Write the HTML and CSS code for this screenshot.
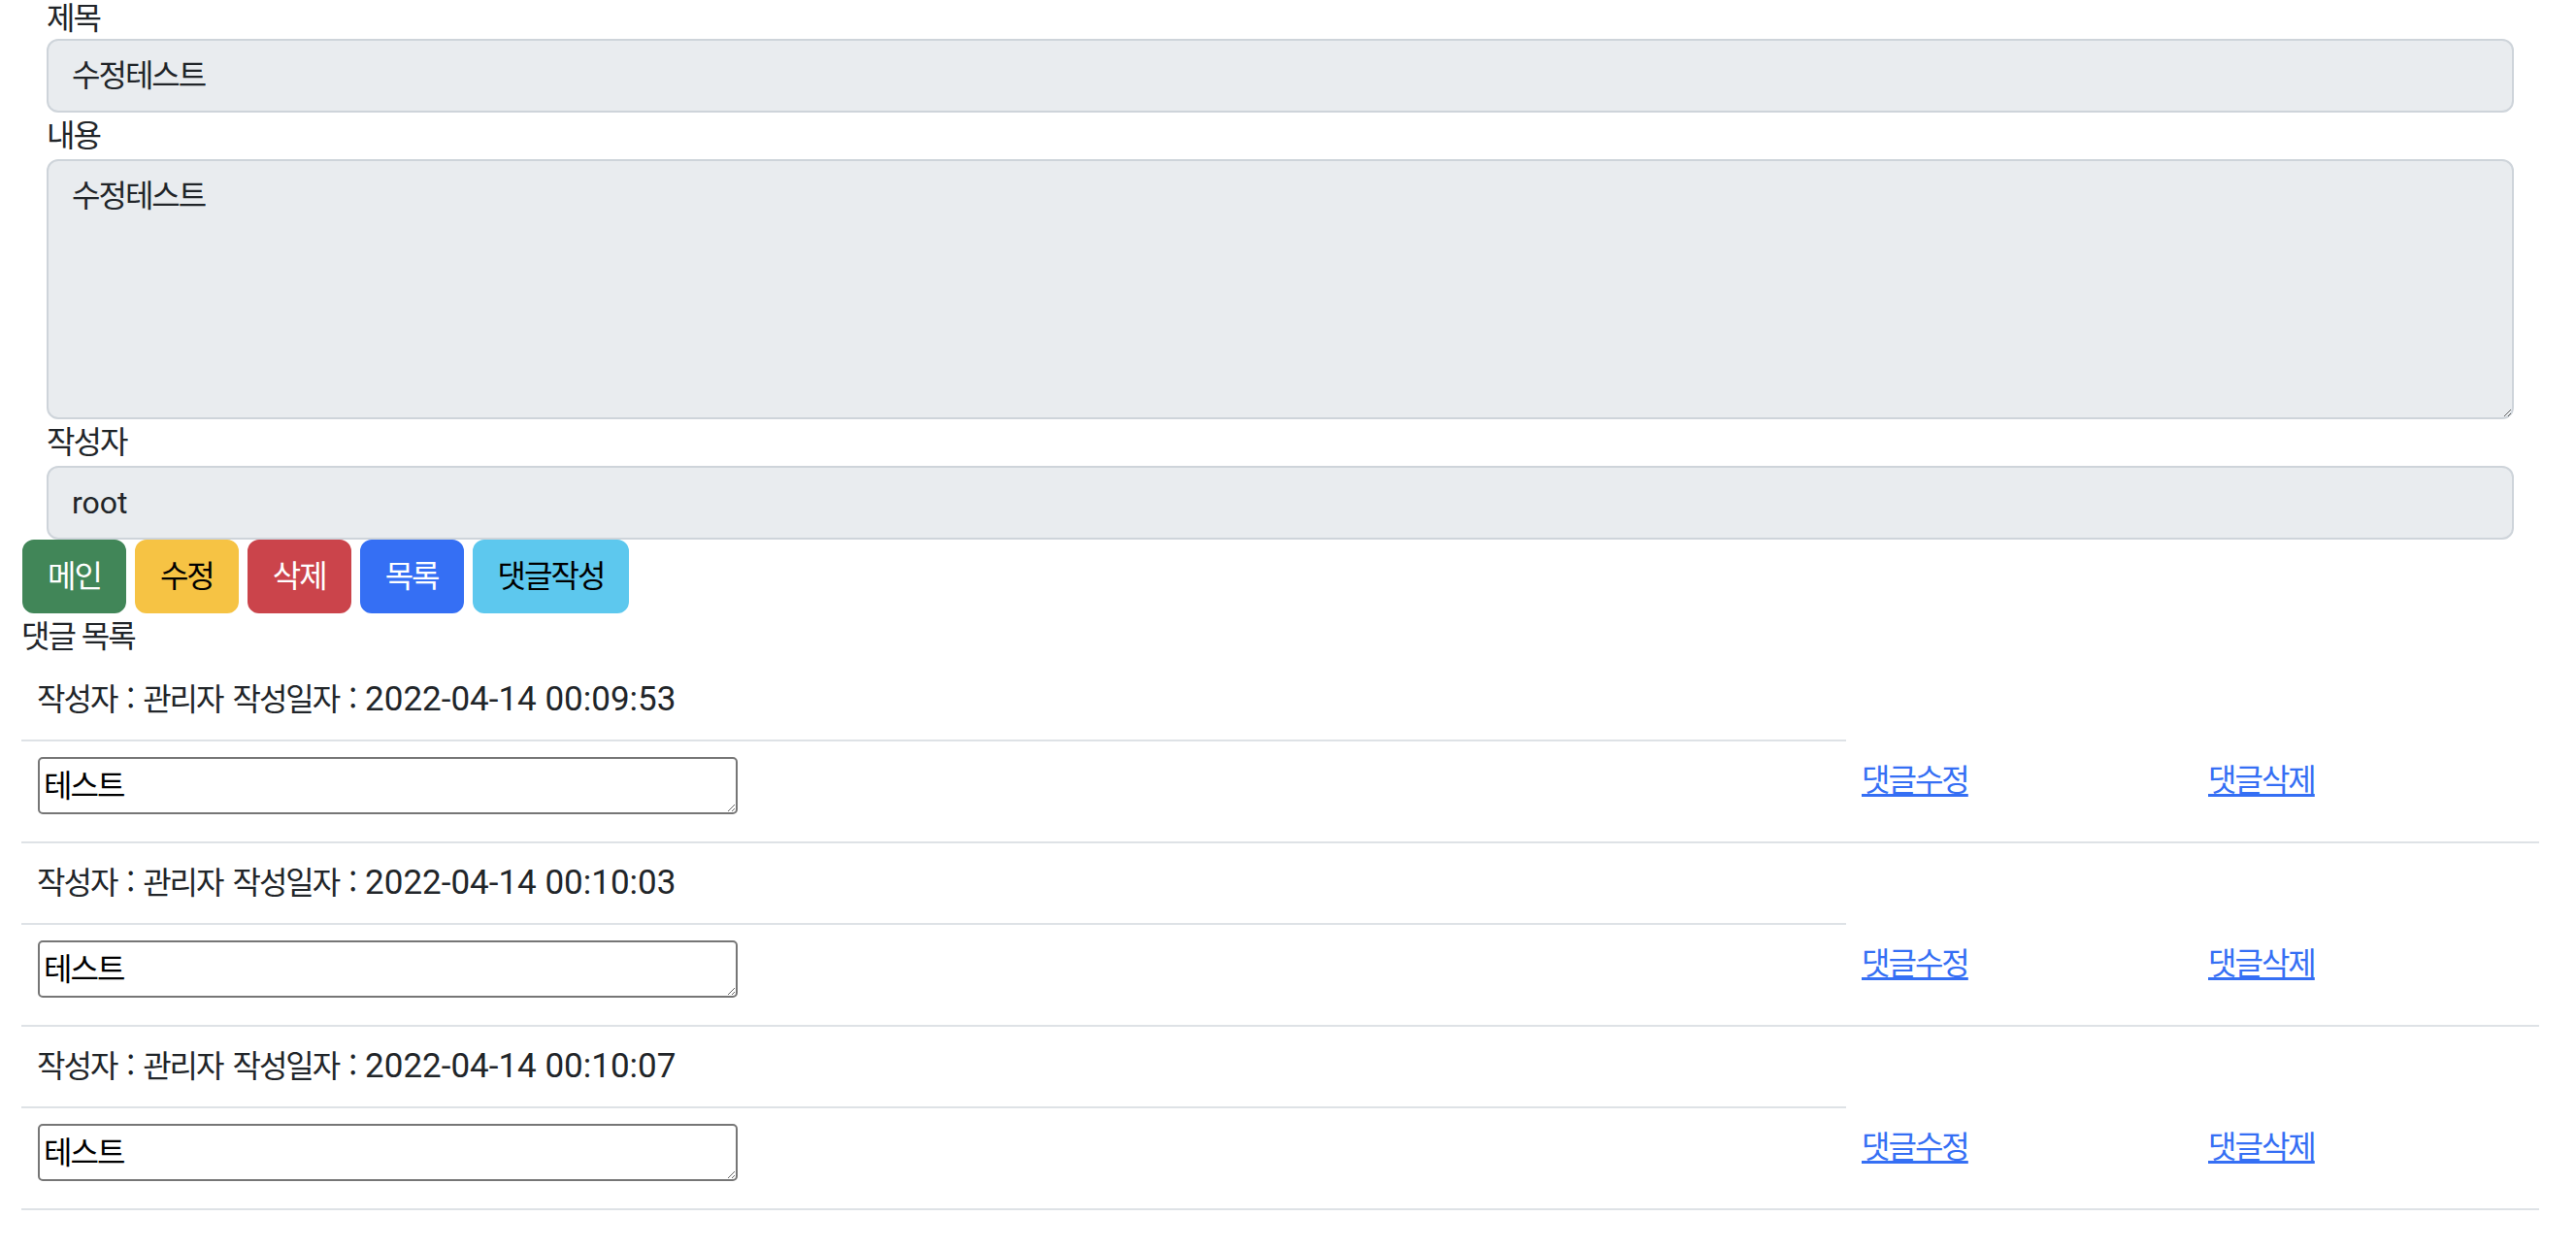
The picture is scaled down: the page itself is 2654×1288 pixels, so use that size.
FILE: index.html
```html
<!DOCTYPE html>
<html lang="ko">
<head>
<meta charset="utf-8">
<title>게시글 수정</title>
<link rel="stylesheet" href="styles.css">
</head>
<body>
<div class="page">
  <div class="form">
    <label class="lbl first">제목</label>
    <input class="field" type="text" value="수정테스트" readonly>
    <label class="lbl">내용</label>
    <textarea class="field area" readonly>수정테스트</textarea>
    <label class="lbl">작성자</label>
    <input class="field lat" type="text" value="root" readonly>
  </div>
  <div class="btns">
    <button class="btn btn-main" type="button">메인</button>
    <button class="btn btn-edit" type="button">수정</button>
    <button class="btn btn-del" type="button">삭제</button>
    <button class="btn btn-list" type="button">목록</button>
    <button class="btn btn-reply" type="button">댓글작성</button>
  </div>
  <div class="lbl list-title">댓글 목록</div>
  <table class="cmt">
    <colgroup><col class="c1"><col class="c2"><col class="c3"></colgroup>
    <tbody>
      <tr><td class="meta">작성자 : 관리자 작성일자 : <span class="num">2022-04-14 00:09:53</span></td></tr>
      <tr>
        <td><textarea class="reply">테스트</textarea></td>
        <td class="act"><a class="lnk" href="#">댓글수정</a></td>
        <td class="act"><a class="lnk" href="#">댓글삭제</a></td>
      </tr>
      <tr><td class="meta">작성자 : 관리자 작성일자 : <span class="num">2022-04-14 00:10:03</span></td></tr>
      <tr>
        <td><textarea class="reply">테스트</textarea></td>
        <td class="act"><a class="lnk" href="#">댓글수정</a></td>
        <td class="act"><a class="lnk" href="#">댓글삭제</a></td>
      </tr>
      <tr><td class="meta">작성자 : 관리자 작성일자 : <span class="num">2022-04-14 00:10:07</span></td></tr>
      <tr>
        <td><textarea class="reply">테스트</textarea></td>
        <td class="act"><a class="lnk" href="#">댓글수정</a></td>
        <td class="act"><a class="lnk" href="#">댓글삭제</a></td>
      </tr>
    </tbody>
  </table>
</div>
</body>
</html>
```
FILE: styles.css
```css
html, body {
  margin: 0;
  padding: 0;
  background: #ffffff;
}
body {
  font-family: "Noto Sans CJK KR", "Noto Sans", sans-serif;
  font-size: 32px;
  line-height: 48px;
  letter-spacing: -2px;
  color: #212529;
}
.page {
  padding: 0 38px 0 22px;
}
.form {
  display: flex;
  flex-direction: column;
  padding: 0 26px;
}
.lbl {
  display: block;
  box-sizing: border-box;
  height: 48px;
  line-height: 42px;
  padding-bottom: 6px;
}
.lbl.first {
  height: 40px;
  padding: 0 0 2px;
  line-height: 32px;
}
.field {
  display: block;
  box-sizing: border-box;
  width: 100%;
  height: 76px;
  margin: 0;
  padding: 9px 24px 15px;
  font: inherit;
  line-height: 48px;
  letter-spacing: -2px;
  color: #212529;
  background: #e9ecef;
  border: 2px solid #ced4da;
  border-radius: 12px;
  outline: none;
}
.field.area {
  height: 268px;
  resize: vertical;
}
.field.lat {
  font-family: Roboto, "Noto Sans", sans-serif;
  letter-spacing: 0;
  padding-top: 12px;
  padding-bottom: 12px;
}
.btns {
  display: flex;
  gap: 9px;
  padding-left: 1px;
}
.btn {
  box-sizing: border-box;
  height: 76px;
  margin: 0;
  padding: 9px 24px 15px;
  font: inherit;
  line-height: 48px;
  letter-spacing: -2px;
  border: 2px solid transparent;
  border-radius: 12px;
  cursor: pointer;
}
.btn-main { background: #418658; border-color: #418658; color: #ffffff; }
.btn-edit { background: #f6c344; border-color: #f6c344; color: #000000; }
.btn-del { background: #cb444b; border-color: #cb444b; color: #ffffff; }
.btn-list { background: #356ff4; border-color: #356ff4; color: #ffffff; }
.btn-reply { background: #5dc8ee; border-color: #5dc8ee; color: #000000; }
.cmt {
  width: 2594px;
  table-layout: fixed;
  border-collapse: separate;
  border-spacing: 0;
}
.c1 { width: 1880px; }
.c2 { width: 357px; }
.c3 { width: 357px; }
.cmt td {
  padding: 16px;
  vertical-align: top;
  border-bottom: 2px solid #dee2e6;
}
.cmt td.meta {
  height: 48px;
  padding: 14px 16px 20px;
  word-spacing: 3px;
}
.cmt td.act {
  padding-top: 13px;
}
.num {
  font-family: Roboto, "Noto Sans", sans-serif;
  font-size: 35px;
  line-height: 40px;
  letter-spacing: 0;
  word-spacing: 0;
}
.reply {
  display: block;
  box-sizing: border-box;
  width: 721px;
  height: 59px;
  margin: 0 0 12px 1px;
  padding: 1px 4px 7px;
  font: inherit;
  line-height: 48px;
  letter-spacing: -2px;
  color: #000000;
  background: #ffffff;
  border: 2px solid #767676;
  border-radius: 5px;
  overflow: hidden;
}
.lnk {
  color: #356ff4;
  text-decoration: underline;
  text-underline-offset: 3px;
}
```
